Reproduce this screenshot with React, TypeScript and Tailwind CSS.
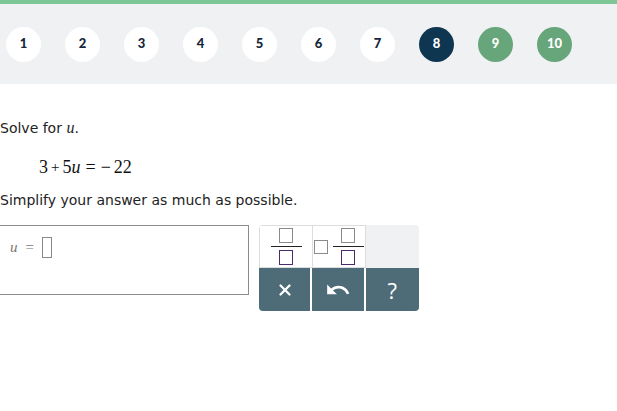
import { X } from "lucide-react";
import { MdUndo } from "react-icons/md";

const steps = [1, 2, 3, 4, 5, 6, 7, 8, 9, 10];

function StepDot({ n }: { n: number }) {
  let cls = "bg-white text-[#15263a]";
  if (n === 8) cls = "bg-[#0e3651] text-white";
  if (n > 8) cls = "bg-[#67a57b] text-white";
  return (
    <div
      className={`w-[35px] h-[35px] rounded-full flex items-center justify-center text-[13px] font-black ${cls}`}
      style={{ fontFamily: "Lato, 'Open Sans', sans-serif" }}
    >
      {n}
    </div>
  );
}

function Box() {
  return <div className="w-[14px] h-[15px] border border-[#4b2a6e]" />;
}

function Frac() {
  return (
    <div className="flex flex-col items-center gap-[3px]">
      <div className="w-[14px] h-[15px] border border-[#8a8a8a]" />
      <div className="w-[31px] h-px bg-[#222]" />
      <Box />
    </div>
  );
}

const serif = { fontFamily: "'Liberation Serif', 'Times New Roman', serif" };

export default function App() {
  return (
    <div className="w-[617px] h-[411px] bg-white overflow-hidden" style={{ fontFamily: "'DejaVu Sans', Verdana, sans-serif" }}>
      <div className="h-[4px] bg-[#7dc796]" />
      <div className="h-[80px] bg-[#f0f1f3] flex items-center gap-[24px] pl-[6px]">
        {steps.map((n) => (
          <StepDot key={n} n={n} />
        ))}
      </div>

      <div className="pt-[35px] text-[14px] text-[#222]">
        <p className="leading-[17px]">
          Solve for <span className="italic text-[16px]" style={serif}>u</span>.
        </p>
        <p className="pl-[39px] mt-[19px] text-[18px] leading-[22px] text-[#111] flex items-center" style={serif}>
          <span>3</span>
          <span className="mx-[3px] text-[15px]">+</span>
          <span>5</span>
          <span className="italic">u</span>
          <span className="mx-[5px]">=</span>
          <span>−</span>
          <span className="ml-[3px]">22</span>
        </p>
        <p className="mt-[14px] leading-[17px]">Simplify your answer as much as possible.</p>

        <div className="flex items-start mt-[16px]">
          <div className="-ml-px w-[250px] h-[70px] border border-[#8c8c8c] flex items-start pt-[11px] pl-[10px]">
            <span className="italic text-[#777] text-[15px] leading-[20px]" style={serif}>u</span>
            <span className="text-[#777] text-[15px] leading-[20px] mx-[8px]" style={serif}>=</span>
            <div className="w-[10px] h-[21px] border border-[#888]" />
          </div>

          <div className="ml-[10px] w-[160px] rounded-[4px] overflow-hidden">
            <div className="grid grid-cols-3 h-[43px]">
              <div className="bg-white border border-[#dcdde0] border-r-0 flex items-center justify-center">
                <Frac />
              </div>
              <div className="bg-white border border-[#dcdde0] flex items-center justify-center gap-[5px]">
                <div className="w-[14px] h-[14px] border border-[#8a8a8a]" />
                <Frac />
              </div>
              <div className="bg-[#f0f1f3]" />
            </div>
            <div className="grid grid-cols-3 h-[43px] bg-[#4e6b78] text-white">
              <div className="flex items-center justify-center border-r-2 border-white">
                <X size={18} strokeWidth={3} />
              </div>
              <div className="flex items-center justify-center border-r-2 border-white">
                <MdUndo size={26} />
              </div>
              <div className="flex items-center justify-center text-[22px] leading-none" style={{ fontFamily: "'Open Sans', sans-serif" }}>
                ?
              </div>
            </div>
          </div>
        </div>
      </div>
    </div>
  );
}
